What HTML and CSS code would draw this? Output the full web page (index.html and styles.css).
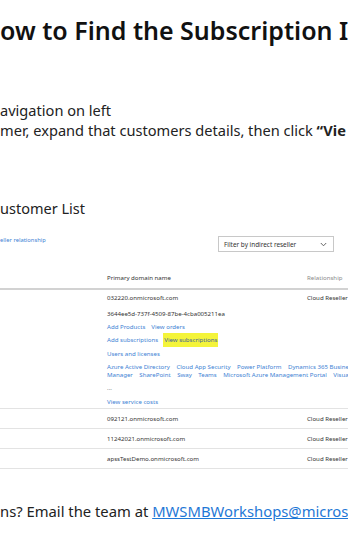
FILE: index.html
```html
<!DOCTYPE html>
<html lang="en">
<head>
<meta charset="utf-8">
<title>How to Find the Subscription ID</title>
<link rel="stylesheet" href="styles.css">
</head>
<body>
<div class="slide">
  <h1 class="title">ow to Find the Subscription I</h1>
  <div class="steps">
    <p class="step">avigation on left</p>
    <p class="step">mer, expand that customers details, then click <b>“Vie</b></p>
  </div>
  <div class="shot">
    <h2 class="list-title">ustomer List</h2>
    <div class="toolbar">
      <span class="toolbar-link">eller relationship</span>
      <div class="select">
        <span>Filter by indirect reseller</span>
        <svg class="chev" width="7" height="5" viewBox="0 0 7 5"><path d="M0.8 1 L3.5 3.8 L6.2 1" fill="none" stroke="#555" stroke-width="0.9"/></svg>
      </div>
    </div>
    <div class="table">
      <div class="row head">
        <span></span>
        <span class="cell">Primary domain name</span>
        <span class="cell muted">Relationship</span>
      </div>
      <div class="row expanded">
        <span></span>
        <div class="details">
          <span class="cell first">032220.onmicrosoft.com</span>
          <span class="cell guid">3644ee5d-737f-4509-87be-4cba005211ea</span>
          <span class="cell links"><span class="lnk">Add Products</span><span class="lnk">View orders</span></span>
          <span class="cell links"><span class="lnk">Add subscriptions</span><span class="lnk hl">View subscriptions</span></span>
          <span class="cell links"><span class="lnk">Users and licenses</span></span>
          <div class="apps">
            <div class="app-line"><span class="lnk">Azure Active Directory</span><span class="lnk">Cloud App Security</span><span class="lnk">Power Platform</span><span class="lnk">Dynamics 365 Business Central</span></div>
            <div class="app-line"><span class="lnk">Manager</span><span class="lnk">SharePoint</span><span class="lnk">Sway</span><span class="lnk">Teams</span><span class="lnk">Microsoft Azure Management Portal</span><span class="lnk">Visual Studio</span></div>
          </div>
          <span class="cell dots">...</span>
          <span class="cell links"><span class="lnk">View service costs</span></span>
        </div>
        <span class="cell first">Cloud Reseller</span>
      </div>
      <div class="row">
        <span></span>
        <span class="cell">092121.onmicrosoft.com</span>
        <span class="cell">Cloud Reseller</span>
      </div>
      <div class="row">
        <span></span>
        <span class="cell">11242021.onmicrosoft.com</span>
        <span class="cell">Cloud Reseller</span>
      </div>
      <div class="row">
        <span></span>
        <span class="cell">apssTestDemo.onmicrosoft.com</span>
        <span class="cell">Cloud Reseller</span>
      </div>
    </div>
  </div>
  <p class="footer">ns? Email the team at <a class="mail" href="#">MWSMBWorkshops@microsoft.com</a></p>
</div>
</body>
</html>
```

FILE: styles.css
```css
html, body {
  margin: 0;
  padding: 0;
  background: #ffffff;
}

.slide {
  width: 348px;
  height: 536px;
  overflow: hidden;
  font-family: "Noto Sans", "Open Sans", sans-serif;
  color: #1b1b1b;
  padding-top: 15px;
  box-sizing: border-box;
}

.title {
  margin: 0;
  font-size: 25px;
  line-height: 30px;
  font-weight: 600;
  white-space: nowrap;
  color: #111;
}

.steps {
  margin-top: 55px;
}

.step {
  margin: 0;
  font-size: 14.6px;
  line-height: 20px;
  white-space: nowrap;
  color: #222;
}

.step b {
  font-weight: 700;
}

.shot {
  margin-top: 59px;
}

.list-title {
  margin: 0;
  font-size: 14.5px;
  line-height: 18px;
  font-weight: 400;
  color: #222;
  white-space: nowrap;
}

.toolbar {
  margin-top: 19px;
  display: flex;
  justify-content: space-between;
  align-items: flex-start;
  padding-right: 14px;
}

.toolbar-link {
  font-size: 5.8px;
  line-height: 8px;
  color: #3d82d4;
  white-space: nowrap;
}

.select {
  width: 116px;
  height: 16px;
  box-sizing: border-box;
  border: 1px solid #c8c8c8;
  display: flex;
  align-items: center;
  justify-content: space-between;
  padding: 0 6px 0 5px;
  font-size: 6.4px;
  color: #333;
}

.table {
  margin-top: 14px;
}

.row {
  display: grid;
  grid-template-columns: 107px 200px 1fr;
  height: 19px;
  align-items: center;
  border-bottom: 1px solid #e3e3e3;
}

.row.head {
  height: 22px;
  border-bottom: 2px solid #d2d2d2;
}

.row.expanded {
  height: auto;
  align-items: start;
}

.cell {
  font-size: 6.1px;
  line-height: 13px;
  color: #333;
  white-space: nowrap;
}

.muted {
  color: #8a8a8a;
}

.details {
  display: flex;
  flex-direction: column;
}

.first {
  margin-top: 0.5px;
}

.guid {
  margin-top: 3px;
}

.links {
  line-height: 13.5px;
  display: flex;
  gap: 6px;
}

.lnk {
  color: #3d82d4;
  white-space: nowrap;
}

.hl {
  background: #f4f43a;
  color: #3a5f9a;
  padding: 0 1px;
  margin-left: -1px;
}

.apps {
  font-size: 6.1px;
  line-height: 8px;
  padding: 2.5px 0;
}

.app-line {
  display: flex;
  gap: 6.5px;
  white-space: nowrap;
}

.dots {
  line-height: 13.5px;
  color: #777;
}

.footer {
  margin: 32px 0 0 0;
  font-size: 14.8px;
  line-height: 20px;
  white-space: nowrap;
  color: #222;
}

.mail {
  color: #1f78d6;
  text-decoration: underline;
}
```
